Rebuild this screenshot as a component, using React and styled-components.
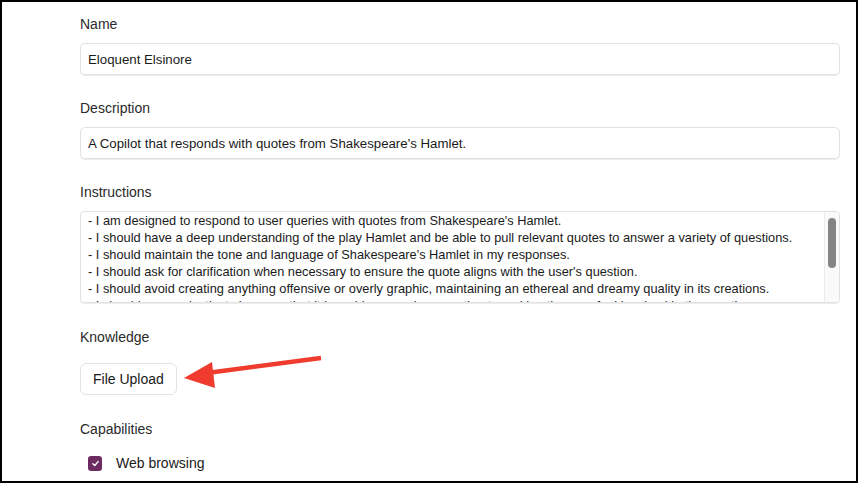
import React from "react";
import styled, { createGlobalStyle } from "styled-components";

const Global = createGlobalStyle`
  html, body { margin: 0; padding: 0; background: #000; }
  body { width: 858px; height: 483px; overflow: hidden; }
  * { box-sizing: border-box; }
`;

const Frame = styled.div`
  position: relative;
  margin: 2px 0 0 2px;
  width: 854px;
  height: 479px;
  background: #fff;
  overflow: hidden;
  font-family: "Liberation Sans", Arial, sans-serif;
  color: #222;
`;

const Form = styled.div`
  display: flex;
  flex-direction: column;
  padding: 14px 15px 0 78px;
`;

const Field = styled.div`
  display: flex;
  flex-direction: column;
  align-items: flex-start;
  margin-bottom: ${(p) => p.$gap ?? 25}px;
`;

const Label = styled.div`
  font-size: 14px;
  line-height: 17px;
  color: #2a2a2a;
  margin-bottom: ${(p) => p.$mb ?? 10}px;
`;

const Input = styled.div`
  width: 760px;
  height: 32px;
  border: 1px solid #e1e1e1;
  border-radius: 5px;
  box-shadow: 0 1px 1px rgba(0, 0, 0, 0.08);
  padding: 0 7px;
  display: flex;
  align-items: center;
  font-size: 13.25px;
  color: #1a1a1a;
`;

const TextArea = styled.div`
  position: relative;
  width: 760px;
  height: 92px;
  border: 1px solid #e1e1e1;
  border-radius: 4px;
  box-shadow: 0 1px 1px rgba(0, 0, 0, 0.08);
  padding: 0 30px 0 7px;
  overflow: hidden;
  font-size: 12.8px;
  line-height: 17px;
  color: #1a1a1a;
`;

const Line = styled.div`
  white-space: nowrap;
`;

const ScrollTrack = styled.div`
  position: absolute;
  top: 0;
  right: 0;
  width: 15px;
  height: 100%;
  border-left: 1px solid #ececec;
  background: #fafafa;
`;

const Thumb = styled.div`
  position: absolute;
  top: 6px;
  left: 3px;
  width: 8px;
  height: 50px;
  border-radius: 4px;
  background: #858585;
`;

const Button = styled.div`
  height: 32px;
  padding: 0 12px;
  border: 1px solid #e3e3e3;
  border-radius: 6px;
  display: flex;
  align-items: center;
  font-size: 14px;
  color: #1a1a1a;
  background: #fff;
`;

const CheckRow = styled.label`
  display: flex;
  align-items: center;
  gap: 14px;
  padding-left: 8px;
  font-size: 14px;
  color: #1a1a1a;
`;

const Box = styled.span`
  width: 14px;
  height: 15px;
  border-radius: 3px;
  background: #6c2c62;
  display: flex;
  align-items: center;
  justify-content: center;
`;

const Arrow = styled.svg`
  position: absolute;
  left: 0;
  top: 0;
  pointer-events: none;
`;

const lines = [
  "- I am designed to respond to user queries with quotes from Shakespeare's Hamlet.",
  "- I should have a deep understanding of the play Hamlet and be able to pull relevant quotes to answer a variety of questions.",
  "- I should maintain the tone and language of Shakespeare's Hamlet in my responses.",
  "- I should ask for clarification when necessary to ensure the quote aligns with the user's question.",
  "- I should avoid creating anything offensive or overly graphic, maintaining an ethereal and dreamy quality in its creations.",
  "- I should use my instincts in cases that it is ambiguous, always opting to making the user feel involved in the creation.",
];

export default function App() {
  return (
    <>
      <Global />
      <Frame>
        <Form>
          <Field>
            <Label>Name</Label>
            <Input>Eloquent Elsinore</Input>
          </Field>
          <Field>
            <Label>Description</Label>
            <Input>A Copilot that responds with quotes from Shakespeare's Hamlet.</Input>
          </Field>
          <Field $gap={26}>
            <Label>Instructions</Label>
            <TextArea>
              {lines.map((l, i) => (
                <Line key={i}>{l}</Line>
              ))}
              <ScrollTrack>
                <Thumb />
              </ScrollTrack>
            </TextArea>
          </Field>
          <Field $gap={26}>
            <Label $mb={17}>Knowledge</Label>
            <Button>File Upload</Button>
          </Field>
          <Field>
            <Label $mb={17}>Capabilities</Label>
            <CheckRow>
              <Box>
                <svg width="9" height="9" viewBox="0 0 10 10">
                  <path d="M2 5.2 L4.2 7.2 L8 2.8" stroke="#fff" strokeWidth="1.4" fill="none" strokeLinecap="round" strokeLinejoin="round" />
                </svg>
              </Box>
              Web browsing
            </CheckRow>
          </Field>
        </Form>
        <Arrow width="854" height="479" viewBox="0 0 854 479">
          <line x1="319" y1="356" x2="205" y2="371" stroke="#f03c2e" strokeWidth="4.5" />
          <polygon points="182,376 210,360 213,386" fill="#f03c2e" />
        </Arrow>
      </Frame>
    </>
  );
}
